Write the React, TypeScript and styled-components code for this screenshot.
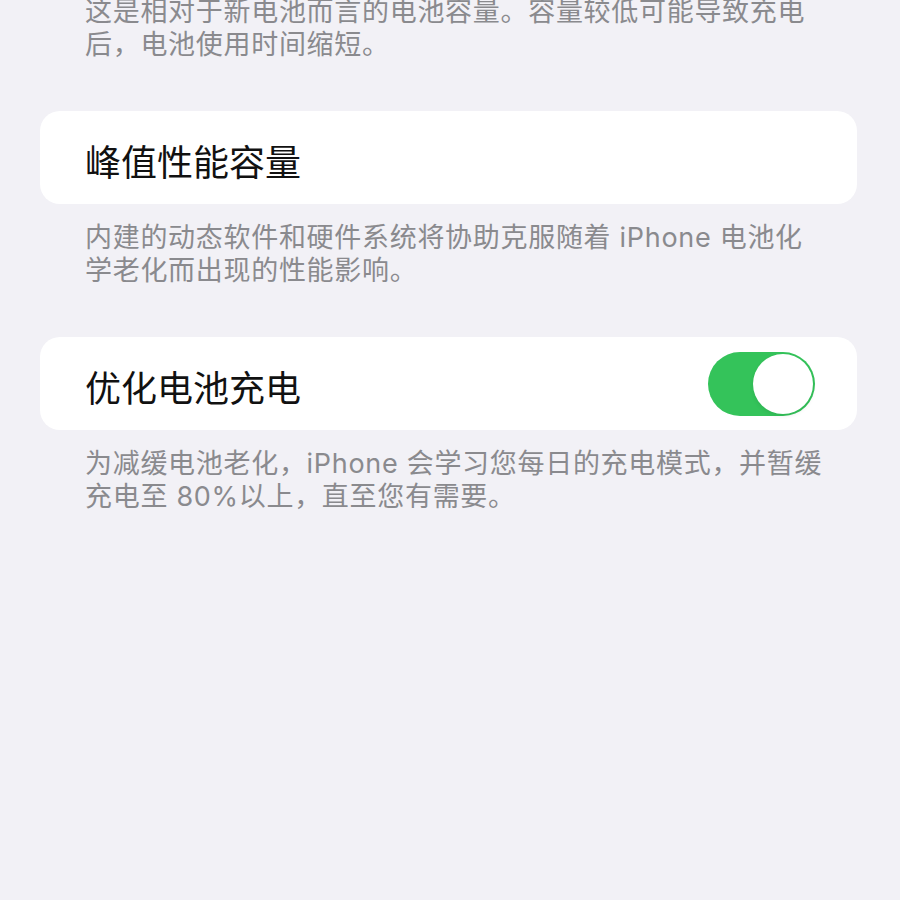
import React from 'react';
import styled, { createGlobalStyle } from 'styled-components';

const GlobalStyle = createGlobalStyle`
  html, body {
    margin: 0;
    padding: 0;
    background: #f2f1f6;
  }
  body {
    font-family: Inter, "Noto Sans CJK SC", sans-serif;
    -webkit-font-smoothing: antialiased;
  }
`;

const Page = styled.div`
  display: flex;
  flex-direction: column;
  padding: 0 43px 0 40px;
  margin-top: -5px;
  min-height: 905px;
  box-sizing: border-box;
  overflow: hidden;
`;

const Footer = styled.p<{ $first?: boolean }>`
  margin: 0;
  padding: ${p => (p.$first ? 0 : 17)}px 0 0 45px;
  font-size: 27px;
  line-height: 33px;
  letter-spacing: 0.7px;
  white-space: nowrap;
  color: #8a8a8e;
`;

const Card = styled.div`
  margin-top: 50px;
  height: 93px;
  display: flex;
  align-items: center;
  justify-content: space-between;
  padding: 0 42px 0 45px;
  background: #ffffff;
  border-radius: 20px;
`;

const Title = styled.span`
  font-size: 36px;
  color: #111111;
  padding-top: 4px;
`;

const Toggle = styled.button<{ $on: boolean }>`
  width: 107px;
  height: 64px;
  padding: 2px;
  border: none;
  border-radius: 32px;
  background: ${p => (p.$on ? '#34c35a' : '#e4e4e9')};
  display: flex;
  justify-content: ${p => (p.$on ? 'flex-end' : 'flex-start')};
  cursor: pointer;
`;

const Knob = styled.span`
  width: 60px;
  height: 60px;
  border-radius: 50%;
  background: #ffffff;
  box-shadow: 0 2px 4px rgba(0, 0, 0, 0.08);
`;

export default function App() {
  return (
    <>
      <GlobalStyle />
      <Page>
        <Footer $first>
          这是相对于新电池而言的电池容量。容量较低可能导致充电
          <br />
          后，电池使用时间缩短。
        </Footer>
        <Card>
          <Title>峰值性能容量</Title>
        </Card>
        <Footer>
          内建的动态软件和硬件系统将协助克服随着 iPhone 电池化
          <br />
          学老化而出现的性能影响。
        </Footer>
        <Card>
          <Title>优化电池充电</Title>
          <Toggle $on aria-label="优化电池充电">
            <Knob />
          </Toggle>
        </Card>
        <Footer>
          为减缓电池老化，iPhone 会学习您每日的充电模式，并暂缓
          <br />
          充电至 80%以上，直至您有需要。
        </Footer>
      </Page>
    </>
  );
}
